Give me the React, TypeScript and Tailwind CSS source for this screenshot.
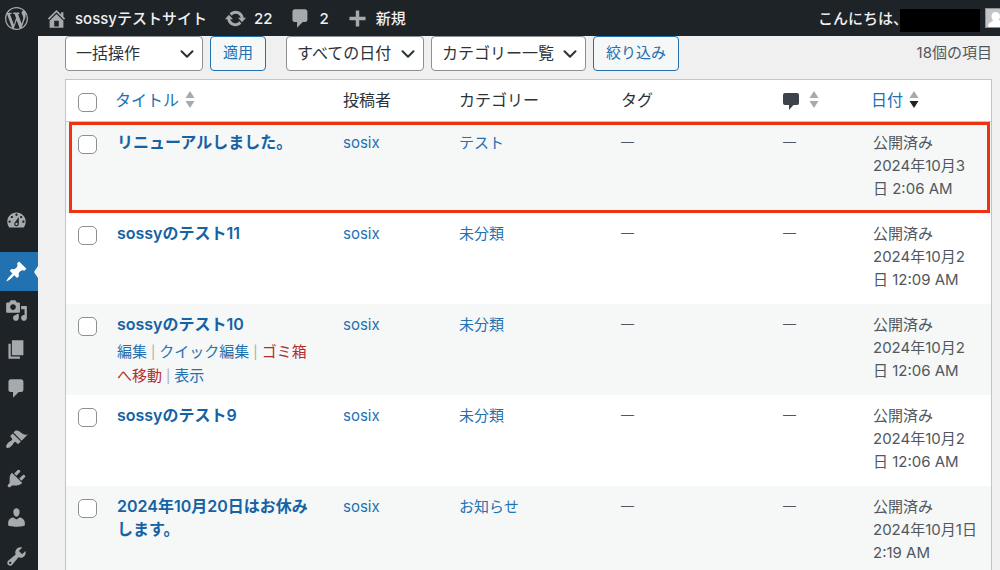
import type { ReactNode } from 'react';
import { ChevronDown } from 'lucide-react';

const icons = {
  wordpress:
    'M20 10c0-5.51-4.49-10-10-10C4.48 0 0 4.49 0 10c0 5.52 4.48 10 10 10 5.51 0 10-4.48 10-10zM7.78 15.37L4.37 6.22c.55-.02 1.17-.08 1.17-.08.5-.06.44-1.13-.06-1.11 0 0-1.45.11-2.37.11-.18 0-.37 0-.58-.01C4.12 2.69 6.87 1.11 10 1.11c2.33 0 4.45.87 6.05 2.34-.68-.11-1.65.39-1.65 1.58 0 .74.45 1.36.9 2.1.35.61.55 1.36.55 2.46 0 1.49-1.4 5-1.4 5l-3.03-8.37c.54-.02.82-.17.82-.17.5-.05.44-1.25-.06-1.22 0 0-1.44.12-2.38.12-.87 0-2.33-.12-2.33-.12-.5-.03-.56 1.2-.06 1.22l.92.08 1.26 3.41zM17.41 10c.24-.64.74-1.87.43-4.25.7 1.29 1.05 2.71 1.05 4.25 0 3.29-1.73 6.24-4.4 7.78.97-2.59 1.94-5.2 2.92-7.78zM6.1 18.09C3.12 16.65 1.11 13.53 1.11 10c0-1.3.23-2.48.72-3.59C3.25 10.3 4.67 14.2 6.1 18.09zm4.03-6.63l2.58 6.98c-.86.29-1.76.45-2.71.45-.79 0-1.57-.11-2.29-.33.81-2.38 1.62-4.74 2.42-7.1z',
  home: 'M16 8.5l1.53 1.53-1.06 1.06L10 4.6l-6.47 6.49-1.06-1.06L10 2.5l4 4v-2h2v4zm-6-2.46l6 5.99V18H4v-5.97zM12 17v-5H8v5h4z',
  update:
    'M10.2 3.28c3.53 0 6.43 2.61 6.92 6h2.08l-3.5 4-3.5-4h2.32c-.45-1.97-2.21-3.45-4.32-3.45-1.45 0-2.73.71-3.54 1.78L4.95 5.66C6.23 4.2 8.11 3.28 10.2 3.28zm-.4 13.44c-3.52 0-6.43-2.61-6.92-6H.8l3.5-4c1.17 1.33 2.33 2.67 3.5 4H5.48c.45 1.97 2.21 3.45 4.32 3.45 1.45 0 2.73-.71 3.54-1.78l1.71 1.95c-1.28 1.46-3.15 2.38-5.25 2.38z',
  comment: 'M5 2h9c1.1 0 2 .9 2 2v7c0 1.1-.9 2-2 2h-2l-5 5v-5H5c-1.1 0-2-.9-2-2V4c0-1.1.9-2 2-2z',
  plus: 'M17 8.5v3h-5.5V17h-3v-5.500H3v-3h5.500V3h3v5.500H17z',
  dashboard:
    'M3.760 16h12.480c1.100-1.370 1.760-3.110 1.760-5 0-4.420-3.580-8-8-8s-8 3.580-8 8c0 1.890.660 3.630 1.760 5zM10 4c.55 0 1 .45 1 1s-.45 1-1 1-1-.45-1-1 .45-1 1-1zM6 6c.55 0 1 .45 1 1s-.45 1-1 1-1-.45-1-1 .45-1 1-1zm8 0c.55 0 1 .45 1 1s-.45 1-1 1-1-.45-1-1 .45-1 1-1zm-5.370 5.550L12 7v6c0 1.100-.9 2-2 2s-2-.9-2-2c0-.57.24-1.080.63-1.450zM4 10c.55 0 1 .45 1 1s-.45 1-1 1-1-.45-1-1 .45-1 1-1zm12 0c.55 0 1 .45 1 1s-.45 1-1 1-1-.45-1-1 .45-1 1-1zm-5 3c0-.55-.45-1-1-1s-1 .45-1 1 .45 1 1 1 1-.45 1-1z',
  pin: 'M10.440 3.020l1.820-1.820 6.360 6.350-1.830 1.820c-1.050-.68-2.480-.57-3.410.36l-.75.75c-.92.93-1.040 2.350-.35 3.410l-1.830 1.820-2.410-2.410-2.800 2.790c-.42.42-3.380 2.710-3.800 2.290s1.860-3.390 2.280-3.810l2.790-2.790L4.100 9.360l1.830-1.820c1.050.69 2.480.57 3.400-.36l.75-.75c.93-.92 1.050-2.350.36-3.410z',
  media:
    'M13 11V4c0-.55-.45-1-1-1h-1.670L9 1H5L3.670 3H2c-.55 0-1 .45-1 1v7c0 .55.45 1 1 1h10c.55 0 1-.45 1-1zM7 4.500c1.380 0 2.500 1.120 2.500 2.500S8.380 9.500 7 9.500 4.500 8.380 4.500 7 5.620 4.500 7 4.500zM14 6h5v10.500c0 1.380-1.120 2.500-2.500 2.500S14 17.880 14 16.500s1.120-2.500 2.500-2.500c.17 0 .34.02.5.05V9h-3V6zm-4 8.050V13h2v3.500c0 1.380-1.120 2.500-2.500 2.500S7 17.880 7 16.500 8.120 14 9.500 14c.17 0 .34.02.5.05z',
  page: 'M6 15V2h10v13H6zm-1 1h8v2H3V5h2v11z',
  brush:
    'M14.480 11.060L7.410 3.990l1.500-1.500c.5-.56 2.300-.47 3.510.32 1.210.8 1.430 1.280 2.910 2.100 1.180.64 2.450 1.260 4.450.85zm-.71.71L6.700 4.700 4.930 6.470c-.39.39-.39 1.020 0 1.410l1.060 1.060c.39.39.39 1.030 0 1.420-.6.6-1.430 1.110-2.210 1.690-.35.26-.7.53-1.010.84C1.430 14.230.4 16.080 1.400 17.070c.99 1 2.840-.03 4.180-1.360.31-.31.58-.66.85-1.020.57-.78 1.080-1.610 1.690-2.210.39-.39 1.020-.39 1.410 0l1.060 1.060c.39.39 1.020.39 1.410 0z',
  plugin:
    'M13.110 4.360L9.870 7.600 8 5.730l3.240-3.240c.35-.34 1.050-.2 1.560.32.52.51.66 1.210.31 1.550zm-8 1.770l.91-1.120 9.010 9.010-1.190.84c-.71.71-2.630 1.160-3.820 1.160H6.140L4.900 17.260c-.59.59-1.540.59-2.120 0-.59-.58-.59-1.530 0-2.120l1.240-1.240v-3.880c0-1.130.4-3.190 1.090-3.890zm7.260 3.970l3.240-3.240c.34-.35 1.040-.21 1.550.31.52.51.66 1.210.31 1.550l-3.240 3.250z',
  user: 'M10 9.250c-2.270 0-2.730-3.440-2.730-3.440C7 4.020 7.820 2 9.970 2c2.160 0 2.980 2.020 2.710 3.810 0 0-.41 3.440-2.680 3.440zm0 2.570L12.720 10c2.390 0 4.520 2.330 4.520 4.530v2.490s-3.650 1.130-7.240 1.130c-3.650 0-7.240-1.130-7.240-1.130v-2.490c0-2.250 1.940-4.480 4.470-4.480z',
  wrench:
    'M16.680 9.770c-1.340 1.340-3.300 1.670-4.950.99l-5.410 6.520c-.99.99-2.590.99-3.580 0s-.99-2.590 0-3.570l6.520-5.420c-.68-1.650-.35-3.610.99-4.950 1.280-1.280 3.120-1.620 4.720-1.060l-2.890 2.890 2.820 2.820 2.860-2.870c.53 1.580.18 3.390-1.080 4.650zM3.810 16.210c.4.39 1.040.39 1.430 0 .4-.4.4-1.040 0-1.430-.39-.4-1.030-.4-1.430 0-.39.39-.39 1.030 0 1.430z',
};

type IconName = keyof typeof icons;

function Icon({ name, className = 'size-[23px]' }: { name: IconName; className?: string }) {
  return (
    <svg viewBox="0 0 20 20" fill="currentColor" aria-hidden="true" className={`shrink-0 ${className}`}>
      <path d={icons[name]} />
    </svg>
  );
}

function BarLink({ icon, children }: { icon: IconName; children: ReactNode }) {
  return (
    <a href="#" className="flex items-center gap-[7px] whitespace-nowrap">
      <Icon name={icon} className="size-[23px] text-[#a7aaad]" />
      <span className="pt-0.5">{children}</span>
    </a>
  );
}

function AdminBar() {
  return (
    <header className="flex h-9 shrink-0 items-center justify-between overflow-hidden bg-[#1d2327] text-[15px] font-medium text-[#f0f0f1]">
      <nav aria-label="ツールバー" className="flex items-center gap-[17px] pl-[5px]">
        <a href="#" aria-label="WordPress" className="text-[#a7aaad]">
          <Icon name="wordpress" />
        </a>
        <BarLink icon="home">sossyテストサイト</BarLink>
        <BarLink icon="update">22</BarLink>
        <BarLink icon="comment">2</BarLink>
        <BarLink icon="plus">新規</BarLink>
      </nav>
      <a href="#" className="flex items-center whitespace-nowrap">
        <span className="pt-0.5">こんにちは、</span>
        <span className="-ml-2 mt-1 h-[23px] w-20 bg-black" />
        <svg viewBox="0 0 15 20" aria-hidden="true" className="ml-[5px] h-5 w-[15px]">
          <rect width="20" height="20" fill="#8c8f94" />
          <rect x="1" y="1" width="18" height="18" fill="#c3c4c7" />
          <path d="M10.500 4c-2.500 0-4 2-4 4.200 0 1.800.8 3.300 1.700 4.100-.4 1.300-3.700 1.800-5 4.200V19H19v-4l-5.500-3c1-1 1.500-2.300 1.500-3.800C15 6 13.200 4 10.500 4z" fill="#fff" />
        </svg>
      </a>
    </header>
  );
}

const menuGroups: { icon: IconName; label: string; current?: boolean }[][] = [
  [{ icon: 'dashboard', label: 'ダッシュボード' }],
  [
    { icon: 'pin', label: '投稿', current: true },
    { icon: 'media', label: 'メディア' },
    { icon: 'page', label: '固定ページ' },
    { icon: 'comment', label: 'コメント' },
  ],
  [
    { icon: 'brush', label: '外観' },
    { icon: 'plugin', label: 'プラグイン' },
    { icon: 'user', label: 'ユーザー' },
    { icon: 'wrench', label: 'ツール' },
  ],
];

function SideMenu() {
  return (
    <nav aria-label="メインメニュー" className="flex w-[38px] shrink-0 flex-col gap-3 overflow-hidden bg-[#1d2327] pt-[165px]">
      {menuGroups.map((group, i) => (
        <ul key={i}>
          {group.map((item) => (
            <li key={item.label}>
              <a
                href="#"
                aria-label={item.label}
                className={`relative flex h-[39px] items-center pl-[5px] ${item.current ? 'bg-[#2271b1] text-white' : 'text-[#a7aaad]'}`}
              >
                <Icon name={item.icon} />
                {item.current && (
                  <svg viewBox="0 0 4 12" aria-hidden="true" className="absolute right-0 h-3 w-1">
                    <path d="M4 0v12L0 6z" fill="#f0f0f1" />
                  </svg>
                )}
              </a>
            </li>
          ))}
        </ul>
      ))}
    </nav>
  );
}

function Dropdown({ label, text, className }: { label: string; text: string; className: string }) {
  return (
    <div className={`relative ${className}`}>
      <select
        aria-label={label}
        className="h-[35px] w-full appearance-none rounded-sm border border-[#8c8f94] bg-white pb-0.5 pl-[10px] text-base text-[#2c3338]"
      >
        <option>{text}</option>
      </select>
      <ChevronDown className="pointer-events-none absolute right-[5px] top-[7px] size-[22px] text-[#2c3338]" strokeWidth={2.2} />
    </div>
  );
}

function OutlineButton({ children }: { children: ReactNode }) {
  return (
    <button type="button" className="h-[35px] rounded-sm border border-[#2271b1] bg-[#f6f7f7] px-3 text-[15px] text-[#2271b1]">
      {children}
    </button>
  );
}

function Toolbar() {
  return (
    <div className="mb-2 flex items-center gap-[7px]">
      <Dropdown label="一括操作を選択" text="一括操作" className="w-[138px]" />
      <OutlineButton>適用</OutlineButton>
      <Dropdown label="日付で絞り込む" text="すべての日付" className="ml-[13px] w-[138px]" />
      <Dropdown label="カテゴリーで絞り込む" text="カテゴリー一覧" className="w-[155px]" />
      <OutlineButton>絞り込み</OutlineButton>
      <span className="ml-auto text-[15px] text-[#50575e]">18個の項目</span>
    </div>
  );
}

function SortArrows({ descending = false }: { descending?: boolean }) {
  return (
    <svg viewBox="0 0 10 17" aria-hidden="true" className="h-[17px] w-[10px]">
      <path d="M5 0l4.500 7h-9z" fill="#a7aaad" />
      <path d="M5 17L.5 10h9z" fill={descending ? '#1d2327' : '#a7aaad'} />
    </svg>
  );
}

function CheckBox({ label }: { label: string }) {
  return (
    <input
      type="checkbox"
      aria-label={label}
      className="block size-[19px] appearance-none rounded-[5px] border border-[#8c8f94] bg-white"
    />
  );
}

interface Post {
  title: string[];
  category: string;
  date: string[];
  actions?: boolean;
  marked?: boolean;
}

const posts: Post[] = [
  { title: ['リニューアルしました。'], category: 'テスト', date: ['2024年10月3', '日 2:06 AM'], marked: true },
  { title: ['sossyのテスト11'], category: '未分類', date: ['2024年10月2', '日 12:09 AM'] },
  { title: ['sossyのテスト10'], category: '未分類', date: ['2024年10月2', '日 12:06 AM'], actions: true },
  { title: ['sossyのテスト9'], category: '未分類', date: ['2024年10月2', '日 12:06 AM'] },
  { title: ['2024年10月20日はお休み', 'します。'], category: 'お知らせ', date: ['2024年10月1日', '2:19 AM'] },
];

function Lines({ lines }: { lines: string[] }) {
  return (
    <>
      {lines.map((line) => (
        <span key={line} className="block whitespace-nowrap">
          {line}
        </span>
      ))}
    </>
  );
}

function Separator() {
  return <span className="mx-1 text-[13px] text-[#a7aaad]">|</span>;
}

function RowActions() {
  return (
    <div className="mt-1 pr-2">
      <a href="#" className="text-[#2271b1]">編集</a>
      <Separator />
      <a href="#" className="text-[#2271b1]">クイック編集</a>
      <Separator />
      <a href="#" className="text-[#b32d2e]">
        <span>ゴミ箱</span>
        <wbr />
        <span>へ移動</span>
      </a>
      <Separator />
      <a href="#" className="text-[#2271b1]">表示</a>
    </div>
  );
}

function PostRow({ post }: { post: Post }) {
  return (
    <tr className="relative h-[91px] align-top odd:bg-[#f6f7f7]">
      <td className="pl-3 pt-[13px]">
        <CheckBox label={`${post.title.join('')}を選択`} />
        {post.marked && <span className="pointer-events-none absolute inset-y-0 left-[3px] right-px border-3 border-[#ee3311]" />}
      </td>
      <td className="px-[9px] pt-[9px]">
        <a href="#" className="block text-base/[23px] font-semibold text-[#1563a5]">
          <Lines lines={post.title} />
        </a>
        {post.actions && <RowActions />}
      </td>
      <td className="px-[9px] pt-[9px]">
        <a href="#" className="text-[#2271b1]">sosix</a>
      </td>
      <td className="px-[9px] pt-[9px]">
        <a href="#" className="text-[#2271b1]">{post.category}</a>
      </td>
      <td className="px-[9px] pt-[9px] text-[13px]/[23px]">—</td>
      <td className="px-[9px] pt-[9px] text-[13px]/[23px]">—</td>
      <td className="pl-[11px] pt-[9px]">
        <Lines lines={['公開済み', ...post.date]} />
      </td>
    </tr>
  );
}

function PostTable() {
  return (
    <div className="border border-[#c3c4c7] bg-white">
      <table className="w-full table-fixed border-separate border-spacing-0 text-[15px]/[23px] text-[#50575e]">
        <colgroup>
          <col className="w-[42px]" />
          <col />
          <col className="w-[116px]" />
          <col className="w-[162px]" />
          <col className="w-[162px]" />
          <col className="w-[88px]" />
          <col className="w-[129px]" />
        </colgroup>
        <thead>
          <tr className="h-[42px] text-left text-base text-[#2c3338] *:border-b *:border-[#c3c4c7] *:pb-0.5 *:font-normal">
            <td className="pl-3 pt-[6px]">
              <CheckBox label="すべて選択" />
            </td>
            <th className="pl-[7px]">
              <a href="#" className="flex items-center gap-[6px] text-[#2271b1]">
                タイトル
                <SortArrows />
              </a>
            </th>
            <th className="pl-[9px]">投稿者</th>
            <th className="pl-[9px]">カテゴリー</th>
            <th className="pl-[9px]">タグ</th>
            <th className="pl-[9px]">
              <a href="#" aria-label="コメント" className="flex items-center gap-[10px]">
                <svg viewBox="0 0 16 17" fill="#3c434a" aria-hidden="true" className="mt-1 h-[17px] w-4">
                  <path d="M2 0h12q2 0 2 2v8q0 2-2 2h-3.500L6 17v-5H2q-2 0-2-2V2q0-2 2-2z" />
                </svg>
                <SortArrows />
              </a>
            </th>
            <th className="pl-[9px]">
              <a href="#" className="flex items-center gap-[6px] text-[#2271b1]">
                日付
                <SortArrows descending />
              </a>
            </th>
          </tr>
        </thead>
        <tbody>
          {posts.map((post) => (
            <PostRow key={post.title[0]} post={post} />
          ))}
        </tbody>
      </table>
    </div>
  );
}

export default function App() {
  return (
    <div className="flex h-screen flex-col overflow-hidden bg-[#f0f0f1] font-[Inter,'Noto_Sans_CJK_JP',sans-serif]" lang="ja">
      <AdminBar />
      <div className="flex min-h-0 flex-1">
        <SideMenu />
        <main className="min-w-0 flex-1 overflow-hidden pl-[27px] pr-2">
          <Toolbar />
          <PostTable />
        </main>
      </div>
    </div>
  );
}
